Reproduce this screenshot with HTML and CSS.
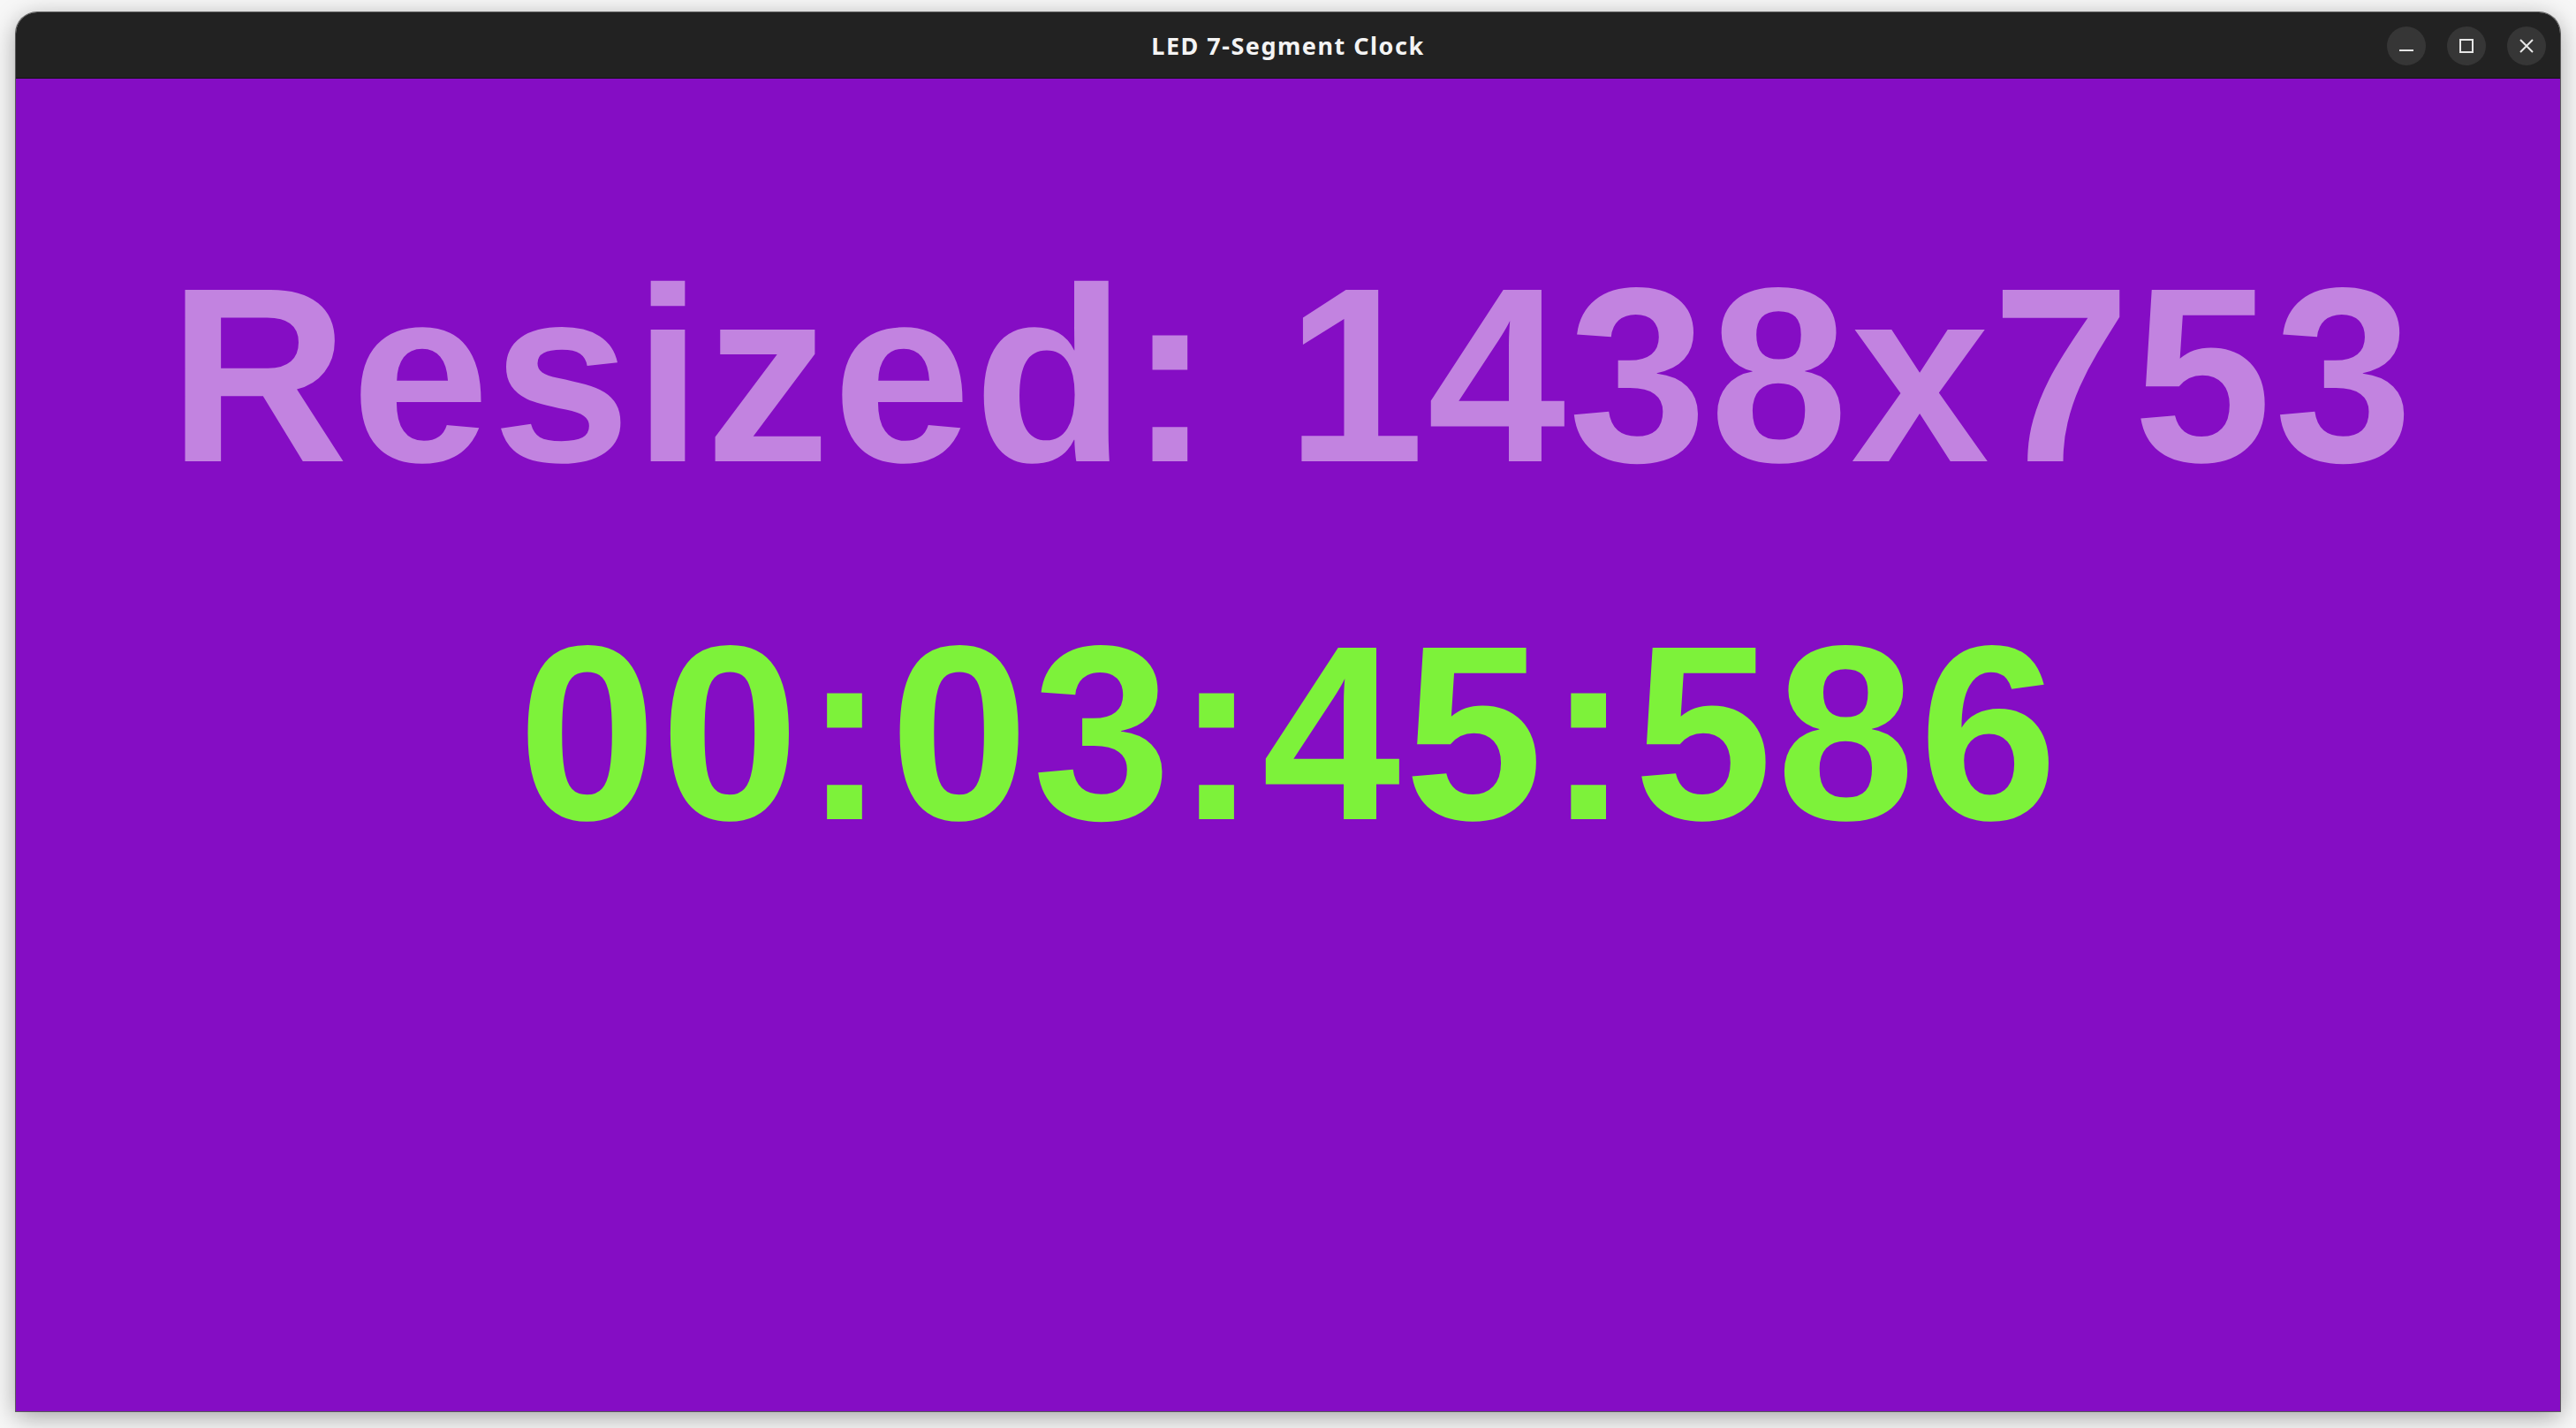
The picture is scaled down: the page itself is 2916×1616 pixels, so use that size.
FILE: index.html
```html
<!DOCTYPE html>
<html lang="en">
<head>
<meta charset="utf-8">
<title>LED 7-Segment Clock</title>
<link rel="stylesheet" href="styles.css">
</head>
<body>
<div class="window">
  <header class="titlebar">
    <div class="title">LED 7-Segment Clock</div>
    <div class="controls">
      <button class="ctl" aria-label="Minimize">
        <svg width="16" height="16" viewBox="0 0 16 16"><path d="M0 13h16" stroke="#e6e6e6" stroke-width="2" fill="none"/></svg>
      </button>
      <button class="ctl" aria-label="Maximize">
        <svg width="16" height="16" viewBox="0 0 16 16"><rect x="1" y="1" width="14" height="14" stroke="#e6e6e6" stroke-width="2" fill="none"/></svg>
      </button>
      <button class="ctl" aria-label="Close">
        <svg width="16" height="16" viewBox="0 0 16 16"><path d="M1 1L15 15M15 1L1 15" stroke="#e6e6e6" stroke-width="2" fill="none"/></svg>
      </button>
    </div>
  </header>
  <main class="content">
    <div class="size-label">Resized: 1438x753</div>
    <div class="clock">00:03:45:586</div>
  </main>
</div>
</body>
</html>
```
FILE: styles.css
```css
html, body {
  margin: 0;
  padding: 0;
}
body {
  width: 2916px;
  height: 1616px;
  background: #f7f7f7;
  overflow: hidden;
}
.window {
  margin: 14px 0 0 18px;
  width: 2880px;
  height: 1583px;
  display: flex;
  flex-direction: column;
  border-radius: 24px 24px 0 0;
  box-shadow: 0 0 0 1px rgba(40,40,40,0.7), 0 6px 28px rgba(0,0,0,0.35);
  overflow: hidden;
}
.titlebar {
  position: relative;
  height: 74px;
  flex: none;
  background: #222222;
  border-bottom: 1px solid #141414;
  display: flex;
  align-items: center;
  justify-content: center;
}
.title {
  font-family: "Noto Sans", "DejaVu Sans", sans-serif;
  font-weight: 700;
  font-size: 27px;
  color: #f4f4f4;
  letter-spacing: 1.5px;
}
.controls {
  position: absolute;
  right: 16px;
  top: 16px;
  display: flex;
  gap: 24px;
}
.ctl {
  width: 44px;
  height: 44px;
  padding: 0;
  border: none;
  border-radius: 50%;
  background: #363636;
  display: flex;
  align-items: center;
  justify-content: center;
}
.content {
  flex: 1;
  background: #850dc4;
  display: flex;
  flex-direction: column;
  align-items: center;
  padding-top: 195px;
  gap: 123px;
  font-family: "Liberation Sans", Arial, sans-serif;
  font-weight: 700;
}
.size-label, .clock {
  font-size: 282px;
  line-height: 282px;
  white-space: nowrap;
}
.size-label {
  color: #c283e0;
  letter-spacing: 3px;
  padding-left: 9px;
}
.clock {
  color: #7df23a;
  letter-spacing: 4.5px;
  padding-left: 4px;
}
```
